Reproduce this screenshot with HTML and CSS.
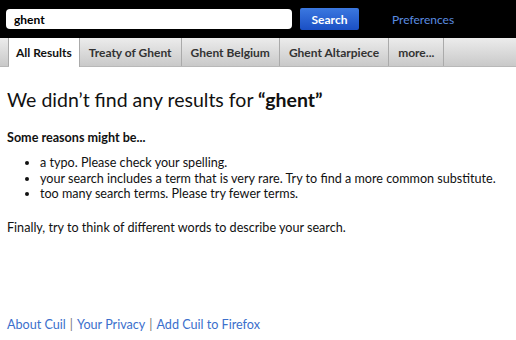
FILE: index.html
```html
<!DOCTYPE html>
<html lang="en">
<head>
    <meta charset="UTF-8">
    <title>Cuil - ghent</title>
    <link rel="stylesheet" href="styles.css">
</head>
<body>
    <div class="topbar">
        <input type="text" class="query" value="ghent">
        <button class="search-btn">Search</button>
        <a class="prefs" href="#">Preferences</a>
    </div>

    <div class="tabs">
        <span class="tab-edge"></span>
        <a class="tab active" href="#">All Results</a>
        <a class="tab" href="#">Treaty of Ghent</a>
        <a class="tab" href="#">Ghent Belgium</a>
        <a class="tab" href="#">Ghent Altarpiece</a>
        <a class="tab" href="#">more...</a>
    </div>

    <div class="content">
        <h1>We didn’t find any results for <b>“ghent”</b></h1>
        <p class="reasons-title">Some reasons might be...</p>
        <ul class="reasons">
            <li>a typo. Please check your spelling.</li>
            <li>your search includes a term that is very rare. Try to find a more common substitute.</li>
            <li>too many search terms. Please try fewer terms.</li>
        </ul>
        <p class="finally">Finally, try to think of different words to describe your search.</p>
    </div>

    <div class="footer">
        <a href="#">About Cuil</a><span class="sep">|</span><a href="#">Your Privacy</a><span class="sep">|</span><a href="#">Add Cuil to Firefox</a>
    </div>
</body>
</html>
```

FILE: styles.css
```css
body {
    font-family: Lato, "Open Sans", sans-serif;
    font-size: 13px;
    margin: 0;
    background: white;
    color: #111;
}

a {
    text-decoration: none;
}

.topbar {
    background: #000;
    height: 38px;
    display: flex;
    align-items: center;
    padding: 0 6px;
}

.query {
    width: 286px;
    height: 20px;
    box-sizing: border-box;
    border: none;
    border-radius: 4px;
    padding: 0 8px;
    font-family: inherit;
    font-size: 12px;
    font-weight: bold;
    color: #000;
}

.search-btn {
    margin-left: 8px;
    width: 59px;
    height: 22px;
    border: none;
    border-radius: 2px;
    background: linear-gradient(#3b78e0, #1a4fc4);
    color: white;
    font-family: inherit;
    font-size: 12px;
    font-weight: bold;
}

.prefs {
    margin-left: 33px;
    color: #5b8de0;
    font-size: 12px;
}

.tabs {
    display: flex;
    height: 28px;
    background: linear-gradient(#ececec, #c9c9c9);
    border-bottom: 1px solid #b8b8b8;
}

.tab-edge {
    width: 8px;
    border-right: 1px solid #aaa;
}

.tab {
    display: flex;
    align-items: center;
    padding: 0 9px;
    border-right: 1px solid #aaa;
    color: #333;
    font-size: 12px;
    font-weight: bold;
}

.tab.active {
    background: white;
    color: #111;
    margin-bottom: -1px;
    padding: 0 7px;
}

.content {
    padding: 0 7px;
    font-size: 12.6px;
}

h1 {
    font-size: 19.5px;
    font-weight: normal;
    margin: 21px 0 0;
}

.reasons-title {
    font-weight: bold;
    margin: 19px 0 0;
}

.reasons {
    margin: 10px 0 0;
    padding-left: 33px;
    line-height: 15.5px;
}

.finally {
    margin: 18px 0 0;
}

.footer {
    padding: 82px 7px 0;
    font-size: 12.6px;
    color: #777;
}

.footer a {
    color: #3b6fcc;
}

.sep {
    margin: 0 4px;
}
```
